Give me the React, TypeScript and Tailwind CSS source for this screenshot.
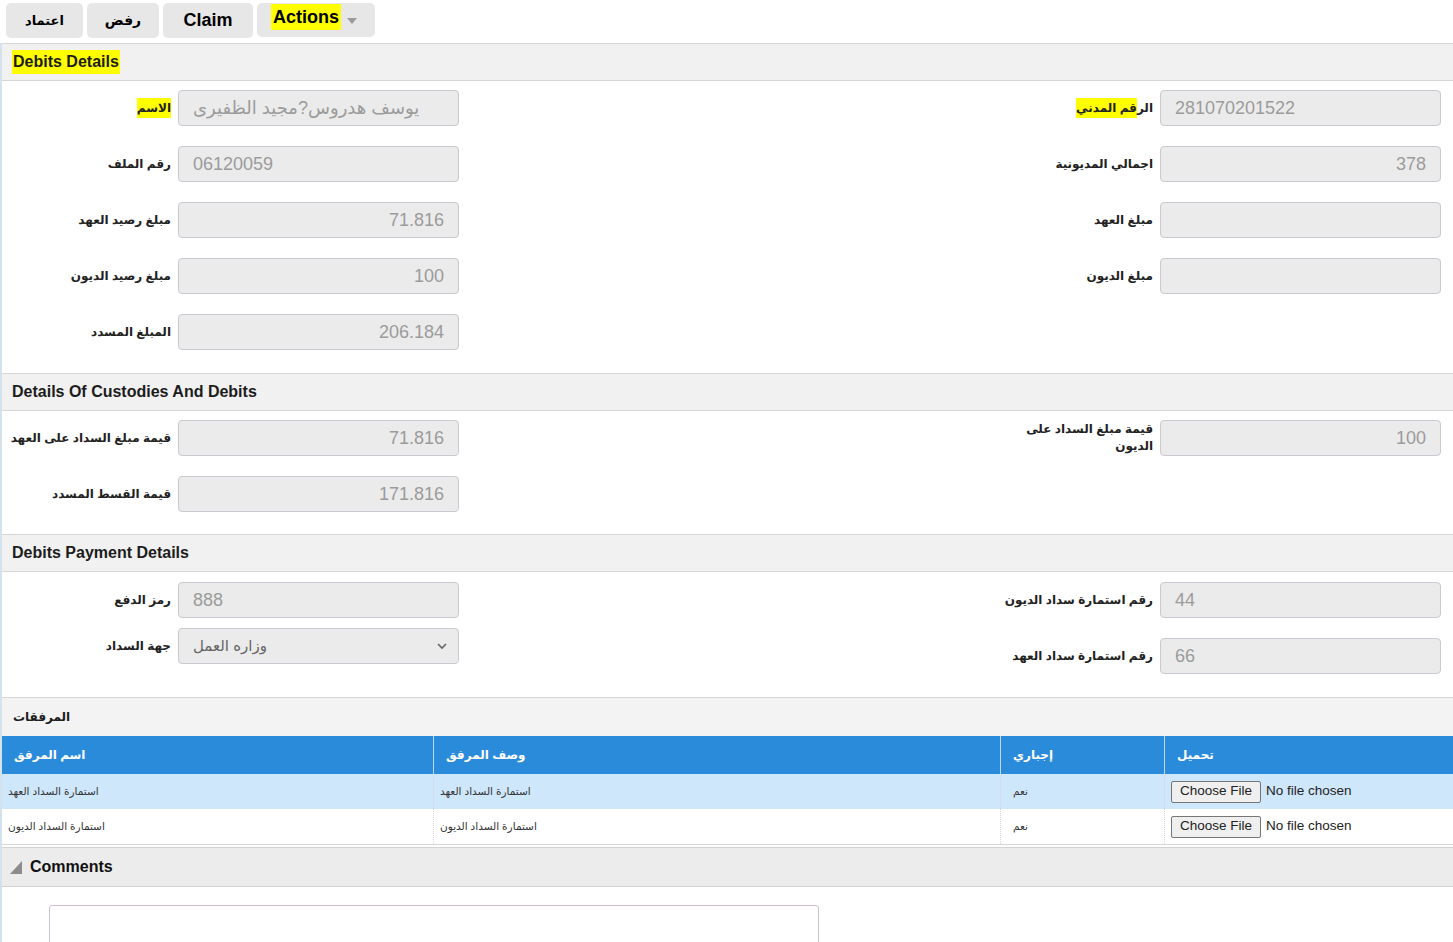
import React from "react";

const FONT = "font-['Liberation_Sans','DejaVu_Sans',sans-serif]";

type Field = {
  label: React.ReactNode;
  value?: string;
  align?: "left" | "right";
};

function Input({ value, align }: { value?: string; align?: "left" | "right" }) {
  return (
    <div
      className={
        "flex h-[36px] w-[281px] shrink-0 items-center rounded-[4px] border border-[#cdc8d0] bg-[#ebebeb] px-[14px] text-[18px] text-[#9b9b9b] " +
        (align === "right" ? "justify-end" : "justify-start")
      }
    >
      <span className="whitespace-nowrap">{value}</span>
    </div>
  );
}

function Label({ children, w }: { children: React.ReactNode; w: string }) {
  return (
    <div
      dir="rtl"
      className={
        w +
        " shrink-0 whitespace-nowrap text-right text-[12px] font-bold leading-[17px] text-[#222]"
      }
    >
      {children}
    </div>
  );
}

function LeftRow({ f }: { f: Field }) {
  return (
    <div className="flex items-center gap-[7px]">
      <Label w="w-[169px]">{f.label}</Label>
      <Input value={f.value} align={f.align} />
    </div>
  );
}

function RightRow({ f }: { f: Field }) {
  return (
    <div className="flex items-center justify-end gap-[7px] pr-[12px]">
      <Label w="w-[160px]">{f.label}</Label>
      <Input value={f.value} align={f.align} />
    </div>
  );
}

function SectionHeader({ children }: { children: React.ReactNode }) {
  return (
    <div className="flex h-[38px] items-center border-y border-[#d6d6d6] bg-[#f1f1f1] px-[10px] text-[16px] font-bold text-[#1c1c1c]">
      {children}
    </div>
  );
}

function Hl({ children }: { children: React.ReactNode }) {
  return <span className="bg-[#ffff00] py-[3px]">{children}</span>;
}

function FileCell() {
  return (
    <div className="flex items-center gap-[5px] pl-[6px] text-[13.5px] text-[#222]">
      <span className="flex h-[22px] w-[90px] items-center justify-center rounded-[2px] border border-[#767676] bg-[#efefef]">
        Choose File
      </span>
      <span>No file chosen</span>
    </div>
  );
}

export default function App() {
  const debits1Left: Field[] = [
    {
      label: <Hl>الاسم</Hl>,
      value: "يوسف هدروس?مجيد الظفيرى",
      align: "left",
    },
    { label: "رقم الملف", value: "06120059", align: "left" },
    { label: "مبلغ رصيد العهد", value: "71.816", align: "right" },
    { label: "مبلغ رصيد الديون", value: "100", align: "right" },
    { label: "المبلغ المسدد", value: "206.184", align: "right" },
  ];
  const debits1Right: Field[] = [
    {
      label: (
        <>
          الر<Hl>قم المدني</Hl>
        </>
      ),
      value: "281070201522",
      align: "left",
    },
    { label: "اجمالي المديونية", value: "378", align: "right" },
    { label: "مبلغ العهد", value: "" },
    { label: "مبلغ الديون", value: "" },
  ];

  const rows = [
    {
      name: "استمارة السداد العهد",
      desc: "استمارة السداد العهد",
      req: "نعم",
      bg: "bg-[#cfe7fb]",
    },
    {
      name: "استمارة السداد الديون",
      desc: "استمارة السداد الديون",
      req: "نعم",
      bg: "bg-white",
    },
  ];

  return (
    <div className={"h-[942px] w-[1453px] overflow-hidden bg-white " + FONT}>
      {/* toolbar */}
      <div className="flex h-[43px] gap-[4px] pl-[6px] pt-[3px]">
        <button className="flex h-[35px] w-[77px] items-center justify-center rounded-[5px] bg-[#e7e7e7] text-[13px] font-bold text-black">
          اعتماد
        </button>
        <button className="flex h-[35px] w-[72px] items-center justify-center rounded-[5px] bg-[#e7e7e7] text-[14px] font-bold text-black">
          رفض
        </button>
        <button className="flex h-[35px] w-[90px] items-center justify-center rounded-[5px] bg-[#e7e7e7] text-[18px] font-bold text-black">
          Claim
        </button>
        <button className="flex h-[34px] w-[118px] items-center gap-[6px] rounded-[5px] bg-[#e7e7e7] pl-[14px] text-[18px] font-bold text-black">
          <span className="-mt-[6px] bg-[#ffff00] px-[2px] leading-[26px]">
            Actions
          </span>
          <svg width="10" height="7" viewBox="0 0 10 7" className="mt-[2px]">
            <polygon points="0,0 10,0 5,6" fill="#9a9a9a" />
          </svg>
        </button>
      </div>

      <div className="border-l-2 border-[#d3e2ec]">
        {/* Debits Details */}
        <SectionHeader>
          <span className="bg-[#ffff00] px-[1px]">Debits Details</span>
        </SectionHeader>
        <div className="grid grid-cols-2 pb-[23px] pt-[9px]">
          <div className="flex flex-col gap-[20px]">
            {debits1Left.map((f, i) => (
              <LeftRow key={i} f={f} />
            ))}
          </div>
          <div className="flex flex-col gap-[20px]">
            {debits1Right.map((f, i) => (
              <RightRow key={i} f={f} />
            ))}
          </div>
        </div>

        {/* Custodies */}
        <SectionHeader>Details Of Custodies And Debits</SectionHeader>
        <div className="grid grid-cols-2 pb-[22px] pt-[9px]">
          <div className="flex flex-col gap-[20px]">
            <LeftRow
              f={{ label: "قيمة مبلغ السداد على العهد", value: "71.816", align: "right" }}
            />
            <LeftRow
              f={{ label: "قيمة القسط المسدد", value: "171.816", align: "right" }}
            />
          </div>
          <div className="flex flex-col gap-[20px]">
            <RightRow
              f={{
                label: (
                  <>
                    قيمة مبلغ السداد على
                    <br />
                    الديون
                  </>
                ),
                value: "100",
                align: "right",
              }}
            />
          </div>
        </div>

        {/* Payment */}
        <SectionHeader>Debits Payment Details</SectionHeader>
        <div className="grid grid-cols-2 pb-[23px] pt-[10px]">
          <div className="flex flex-col gap-[10px]">
            <LeftRow f={{ label: "رمز الدفع", value: "888", align: "left" }} />
            <div className="flex items-center gap-[7px]">
              <Label w="w-[169px]">جهة السداد</Label>
              <div className="flex h-[36px] w-[281px] items-center justify-between rounded-[4px] border border-[#cdc8d0] bg-[#ebebeb] pl-[14px] pr-[10px] text-[15px] text-[#666]">
                <span className="tracking-[1px]">وزاره العمل</span>
                <svg width="12" height="8" viewBox="0 0 12 8">
                  <path d="M2 2 L6 6 L10 2" fill="none" stroke="#666" strokeWidth="1.6" />
                </svg>
              </div>
            </div>
          </div>
          <div className="flex flex-col gap-[20px]">
            <RightRow
              f={{ label: "رقم استمارة سداد الديون", value: "44", align: "left" }}
            />
            <RightRow
              f={{ label: "رقم استمارة سداد العهد", value: "66", align: "left" }}
            />
          </div>
        </div>

        {/* Attachments */}
        <div className="flex h-[39px] items-center border-t border-[#d6d6d6] bg-[#f3f3f3] px-[11px] text-[12px] font-bold text-[#1c1c1c]">
          المرفقات
        </div>
        <div className="border-b border-[#d6d6d6]">
          <div className="grid h-[38px] grid-cols-[432px_567px_164px_1fr] bg-[#2b8bdb] text-[12px] font-bold text-white">
            <div className="flex items-center border-r border-[#bcd9f1] pl-[12px]">اسم المرفق</div>
            <div className="flex items-center border-r border-[#bcd9f1] pl-[12px]">وصف المرفق</div>
            <div className="flex items-center border-r border-[#bcd9f1] pl-[12px]">إجباري</div>
            <div className="flex items-center pl-[12px]">تحميل</div>
          </div>
          {rows.map((r, i) => (
            <div
              key={i}
              className={"grid h-[35px] grid-cols-[432px_567px_164px_1fr] text-[10.5px] text-[#333] " + r.bg}
            >
              <div className="flex items-center border-r border-dotted border-[#d9cfe0] pl-[6px]">{r.name}</div>
              <div className="flex items-center border-r border-dotted border-[#d9cfe0] pl-[6px]">{r.desc}</div>
              <div className="flex items-center border-r border-dotted border-[#d9cfe0] pl-[12px]">{r.req}</div>
              <div className="flex items-center">
                <FileCell />
              </div>
            </div>
          ))}
        </div>

        {/* Comments */}
        <div className="mt-[2px] flex h-[40px] items-center gap-[8px] border-y border-[#d2d2d2] bg-[#ececec] pl-[8px] text-[16px] font-bold text-[#111]">
          <svg width="12" height="13" viewBox="0 0 12 13">
            <polygon points="12,0 12,13 0,13" fill="#8c8c8c" />
          </svg>
          Comments
        </div>
        <div className="pl-[47px] pt-[18px]">
          <div className="h-[60px] w-[770px] rounded-[3px] border border-[#cbc0cf] bg-white" />
        </div>
      </div>
    </div>
  );
}
